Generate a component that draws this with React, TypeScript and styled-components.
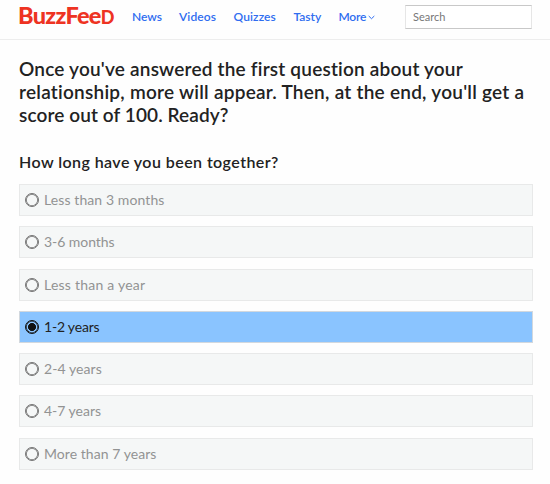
import React, { useState } from "react";
import styled, { createGlobalStyle } from "styled-components";

const GlobalStyle = createGlobalStyle`
  * { box-sizing: border-box; }
  body {
    margin: 0;
    background: #fefefe;
    color: #222;
    font-family: Lato, "Open Sans", sans-serif;
    overflow: hidden;
  }
`;

const Header = styled.header`
  height: 40px;
  padding-left: 18px;
  display: flex;
  align-items: flex-start;
  border-bottom: 1px solid #ededed;
`;

const Logo = styled.a`
  width: 114px;
  color: #ee3322;
  font-size: 23.5px;
  line-height: 30px;
  font-weight: 900;
  letter-spacing: -0.7px;
  white-space: nowrap;
`;

const SmallCap = styled.span`
  font-size: 18px;
`;

const Nav = styled.nav`
  display: flex;
  width: 273px;
`;

const NavLink = styled.a<{ $width: number; $spacing: number }>`
  width: ${(p) => p.$width}px;
  flex: none;
  display: flex;
  align-items: center;
  height: 33px;
  color: #2f6df0;
  font-size: 12px;
  font-weight: 600;
  letter-spacing: ${(p) => p.$spacing}px;
`;

const Chevron = styled.svg`
  width: 7px;
  height: 5px;
  margin: 2px 0 0 2px;
`;

const Search = styled.input`
  width: 127px;
  height: 24px;
  margin-top: 5px;
  padding: 0 8px 2px 7px;
  border: 1px solid #e6e6e6;
  border-top-color: #c8c8c8;
  border-bottom-color: #c8c8c8;
  background: #fff;
  font: 11px Lato, sans-serif;
  &::placeholder { color: #777; opacity: 1; }
`;

const Main = styled.main`
  padding: 17px 17px 0 19px;
`;

const Intro = styled.h2`
  margin: 0;
  font-size: 19px;
  line-height: 23px;
  font-weight: 600;
`;

const Line = styled.span<{ $spacing: number }>`
  display: block;
  white-space: nowrap;
  letter-spacing: ${(p) => p.$spacing}px;
`;

const Question = styled.h3`
  margin: 25px 0 0;
  height: 33px;
  font-size: 16px;
  line-height: 22px;
  font-weight: 600;
`;

const Options = styled.div`
  display: grid;
  gap: 10.3px;
`;

const Option = styled.label<{ $selected: boolean; $spacing: number }>`
  height: 32px;
  padding: 0 0 1px 5px;
  display: flex;
  align-items: center;
  gap: 5px;
  border: 1px solid ${(p) => (p.$selected ? "#d2d8de" : "#e8e9e9")};
  background: ${(p) => (p.$selected ? "#8ac4ff" : "#f5f7f7")};
  color: ${(p) => (p.$selected ? "#222" : "#929393")};
  font-size: 14px;
  letter-spacing: ${(p) => p.$spacing}px;
  cursor: pointer;
`;

const Radio = styled.input`
  appearance: none;
  flex: none;
  width: 14px;
  height: 14px;
  margin: 1px 0 0;
  border: 1px solid #747474;
  border-radius: 50%;
  box-shadow: inset 0 0 0 0.8px #747474;
  &:checked {
    border-color: #111;
    box-shadow: inset 0 0 0 0.6px #111;
    background: radial-gradient(circle, #111 3.7px, transparent 4.3px);
  }
`;

const links = [
  { label: "News", width: 47, spacing: 0 },
  { label: "Videos", width: 54.5, spacing: 0.1 },
  { label: "Quizzes", width: 60, spacing: 0.1 },
  { label: "Tasty", width: 45, spacing: 0 },
  { label: "More", width: 45, spacing: -0.2 },
];

const lines = [
  { text: "Once you've answered the first question about your", spacing: 0.2 },
  { text: "relationship, more will appear. Then, at the end, you'll get a", spacing: 0.25 },
  { text: "score out of 100. Ready?", spacing: 0.1 },
];

const answers = [
  { text: "Less than 3 months", spacing: 0.1 },
  { text: "3-6 months", spacing: -0.05 },
  { text: "Less than a year", spacing: 0.23 },
  { text: "1-2 years", spacing: -0.2 },
  { text: "2-4 years", spacing: 0.07 },
  { text: "4-7 years", spacing: -0.02 },
  { text: "More than 7 years", spacing: 0.05 },
];

export default function App() {
  const [selected, setSelected] = useState(3);
  return (
    <>
      <GlobalStyle />
      <Header>
        <Logo>BuzzFee<SmallCap>D</SmallCap></Logo>
        <Nav>
          {links.map((l) => (
            <NavLink key={l.label} $width={l.width} $spacing={l.spacing}>
              {l.label}
              {l.label === "More" && (
                <Chevron viewBox="0 0 7 5">
                  <path d="M.7 1 3.5 3.7 6.3 1" fill="none" stroke="#2f6df0" />
                </Chevron>
              )}
            </NavLink>
          ))}
        </Nav>
        <Search placeholder="Search" />
      </Header>
      <Main>
        <Intro>
          {lines.map((l) => (
            <Line key={l.text} $spacing={l.spacing}>{l.text}</Line>
          ))}
        </Intro>
        <Question><Line $spacing={0.43}>How long have you been together?</Line></Question>
        <Options>
          {answers.map((a, i) => (
            <Option key={a.text} $selected={i === selected} $spacing={a.spacing}>
              <Radio type="radio" name="duration" checked={i === selected} onChange={() => setSelected(i)} />
              {a.text}
            </Option>
          ))}
        </Options>
      </Main>
    </>
  );
}
